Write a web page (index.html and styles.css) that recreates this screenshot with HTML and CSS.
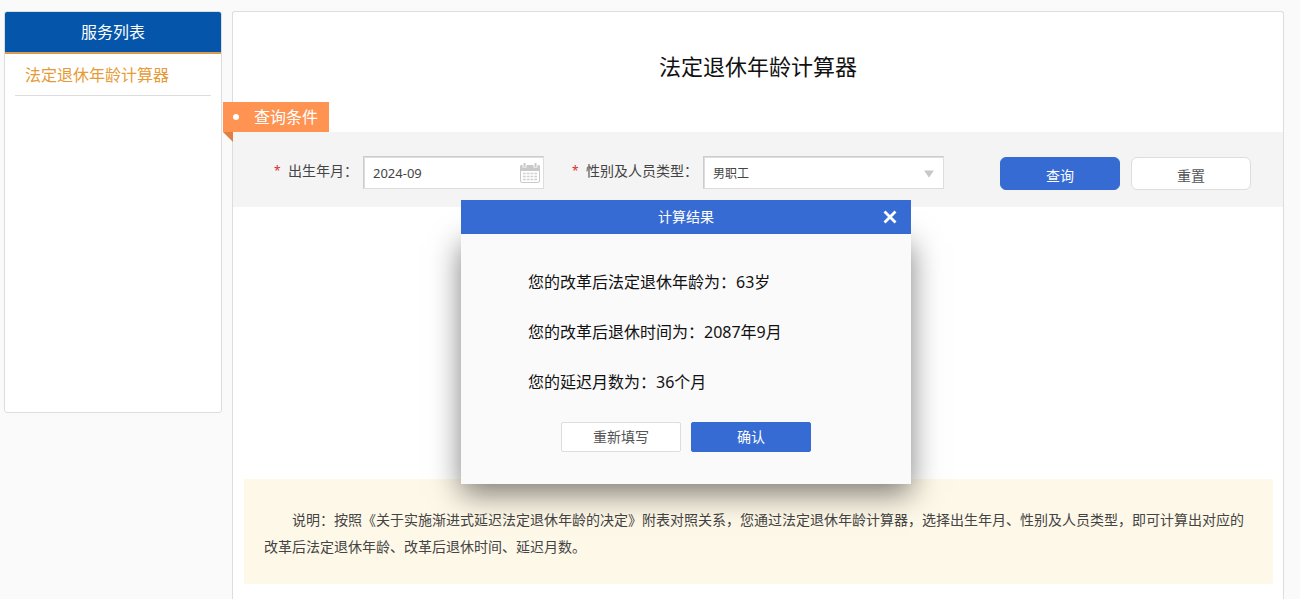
FILE: index.html
```html
<!DOCTYPE html>
<html lang="zh-CN">
<head>
<meta charset="utf-8">
<title>法定退休年龄计算器</title>
<link rel="stylesheet" href="styles.css">
</head>
<body>
<div class="page">
  <nav class="sidebar" aria-label="服务列表">
    <h2 class="sidebar-title">服务列表</h2>
    <ul class="service-list">
      <li><a class="service-link" href="#">法定退休年龄计算器</a></li>
    </ul>
  </nav>

  <main class="main">
    <h1 class="title">法定退休年龄计算器</h1>
    <div class="tag"><span class="tag-dot"></span>查询条件</div>
    <form class="query">
      <label class="label" for="birth"><span class="required">*</span>出生年月：</label>
      <div class="field field-date">
        <input class="control control-date" id="birth" type="text" value="2024-09">
        <svg class="calendar" width="20" height="20" viewBox="0 0 20 20" aria-hidden="true">
          <rect x="0.5" y="2.5" width="19" height="17" rx="1.5" fill="#fff" stroke="#c9c9c9"/>
          <path d="M0 8V3.500a1.500 1.500 0 0 1 1.500-1.500h17A1.500 1.500 0 0 1 20 3.500V8z" fill="#c9c9c9"/>
          <path d="M4.500 0v4.500M15.500 0v4.500" stroke="#fff" stroke-width="4"/>
          <path d="M4.500 0v4M15.500 0v4" stroke="#c9c9c9" stroke-width="2"/>
          <path d="M3 10.500h14M3 13.500h14M3 16.500h14" stroke="#d0d0d0" stroke-width="1.500" stroke-dasharray="2.750 1"/>
        </svg>
      </div>
      <label class="label label-next" for="kind"><span class="required">*</span>性别及人员类型：</label>
      <div class="field field-kind">
        <select class="control control-kind" id="kind">
          <option>男职工</option>
        </select>
        <svg class="arrow" width="10" height="8" viewBox="0 0 10 8" aria-hidden="true"><path d="M0 0.500h10L5 7.500z" fill="#c8c8c8"/></svg>
      </div>
      <div class="query-actions">
        <button class="button button-large button-primary" type="button">查询</button>
        <button class="button button-large" type="reset">重置</button>
      </div>
    </form>

    <p class="note">说明：按照《关于实施渐进式延迟法定退休年龄的决定》附表对照关系，您通过法定退休年龄计算器，选择出生年月、性别及人员类型，即可计算出对应的改革后法定退休年龄、改革后退休时间、延迟月数。</p>

    <section class="dialog" role="dialog" aria-labelledby="dialog-title">
      <header class="dialog-head">
        <h2 class="dialog-title" id="dialog-title">计算结果</h2>
        <button class="close" type="button" aria-label="关闭">
          <svg width="14" height="14" viewBox="0 0 14 14" aria-hidden="true"><path d="M2.500 2.500l9 9M11.500 2.500l-9 9" stroke="#fff" stroke-width="2.800" stroke-linecap="square"/></svg>
        </button>
      </header>
      <div class="dialog-body">
        <div class="results">
          <p class="result">您的改革后法定退休年龄为：63岁</p>
          <p class="result">您的改革后退休时间为：2087年9月</p>
          <p class="result">您的延迟月数为：36个月</p>
        </div>
        <div class="dialog-actions">
          <button class="button" type="button">重新填写</button>
          <button class="button button-primary" type="button">确认</button>
        </div>
      </div>
    </section>
  </main>
</div>
</body>
</html>
```

FILE: styles.css
```css
* {
  box-sizing: border-box;
}

body {
  margin: 0;
  background: #fafafa;
  color: #444;
  font-family: "Noto Sans", "Noto Sans CJK SC", sans-serif;
  font-size: 14px;
}

h1, h2, p, ul {
  margin: 0;
  padding: 0;
  font-weight: 400;
}

button, input, select {
  font-family: inherit;
}

.page {
  display: flex;
  align-items: flex-start;
  gap: 10px;
  padding: 11px 16px 0 4px;
}

/* Sidebar */
.sidebar {
  flex: 0 0 218px;
  min-height: 402px;
  border: 1px solid #ddd;
  border-radius: 3px;
  background: #fff;
  overflow: hidden;
}

.sidebar-title {
  border-bottom: 2px solid #d99c50;
  background: #0556ab;
  color: #fff;
  font-size: 16px;
  line-height: 40px;
  text-align: center;
}

.service-list {
  padding: 0 10px;
  list-style: none;
}

.service-link {
  display: block;
  padding: 2px 10px 0;
  border-bottom: 1px solid #ddd;
  color: #e79b36;
  font-size: 16px;
  line-height: 39px;
  text-decoration: none;
}

/* Main panel */
.main {
  position: relative;
  flex: 1;
  min-height: calc(100vh - 11px);
  border: 1px solid #ddd;
  border-bottom: 0;
  border-radius: 3px 3px 0 0;
  background: #fff;
}

.title {
  padding: 38px 0 20px;
  color: #111;
  font-size: 22px;
  line-height: 32px;
  text-align: center;
}

.tag {
  position: relative;
  display: flex;
  align-items: center;
  gap: 15px;
  width: max-content;
  margin-left: -10px;
  padding: 0 11px 0 10px;
  background: #ff9351;
  color: #fff;
  font-size: 16px;
  line-height: 30px;
}

.tag::after {
  content: "";
  position: absolute;
  top: 100%;
  left: 0;
  border-top: 10px solid #e07f43;
  border-left: 10px solid transparent;
}

.tag-dot {
  width: 6px;
  height: 6px;
  border-radius: 50%;
  background: #fff;
}

/* Query form */
.query {
  display: flex;
  align-items: flex-start;
  padding: 24px 32px 17px 41px;
  background: #f4f4f4;
}

.label {
  display: flex;
  margin-right: 5px;
  line-height: 30px;
  white-space: nowrap;
}

.label-next {
  margin-left: 28px;
}

.required {
  width: 14px;
  color: #d9302c;
  font-size: 12px;
}

.field {
  position: relative;
  display: flex;
  align-items: center;
  height: 33px;
  border: 1px solid #ddd;
  border-top-color: #ccc;
  border-left-color: #ccc;
  box-shadow: inset 1px 1px #ddd;
  background: #fff;
}

.field-date {
  flex: 0 1 181px;
  padding-right: 3px;
}

.field-kind {
  flex: 0 1 241px;
}

.control {
  flex: 1;
  width: 100%;
  min-width: 0;
  height: 31px;
  padding: 1px 9px 0;
  border: 0;
  background: transparent;
  color: #444;
  line-height: 28px;
  outline: 0;
}

.control-date {
  font-size: 13px;
}

.control-kind {
  appearance: none;
  padding-top: 3px;
  font-size: 12px;
}

.calendar {
  flex: none;
  margin-top: 1px;
}

.arrow {
  position: absolute;
  top: 13px;
  right: 9px;
  pointer-events: none;
}

.query-actions {
  display: flex;
  gap: 11px;
  margin-left: auto;
  padding-top: 1px;
}

.button {
  width: 120px;
  height: 30px;
  padding: 0;
  border: 1px solid #ddd;
  border-radius: 2px;
  background: #fff;
  color: #555;
  font-size: 14px;
  line-height: 28px;
}

.button-large {
  height: 33px;
  padding-top: 4px;
  border-radius: 6px;
  line-height: 27px;
}

.button-primary {
  border-color: #376bd4;
  background: #376bd4;
  color: #fff;
}

.note {
  margin: 272px 10px 15px 11px;
  padding: 27px 20px 24px;
  background: #fef8e8;
  line-height: 27px;
  text-indent: 28px;
}

/* Result dialog */
.dialog {
  position: absolute;
  top: 188px;
  left: 228px;
  width: 450px;
}

.dialog-head {
  position: relative;
  z-index: 1;
  display: flex;
  align-items: center;
  padding: 0 14px 0 28px;
  background: #376bd4;
}

.dialog-title {
  flex: 1;
  color: #fff;
  font-size: 14px;
  line-height: 34px;
  text-align: center;
}

.close {
  display: flex;
  padding: 0;
  border: 0;
  background: transparent;
}

.dialog-body {
  background: #fafafa;
  box-shadow: 0 10px 28px rgba(0, 0, 0, 0.5);
}

.results {
  padding: 23px 67px 0;
}

.result {
  color: #111;
  font-size: 16px;
  line-height: 50px;
  white-space: nowrap;
}

.dialog-actions {
  display: flex;
  justify-content: center;
  gap: 10px;
  padding: 15px 0 32px;
}
```
